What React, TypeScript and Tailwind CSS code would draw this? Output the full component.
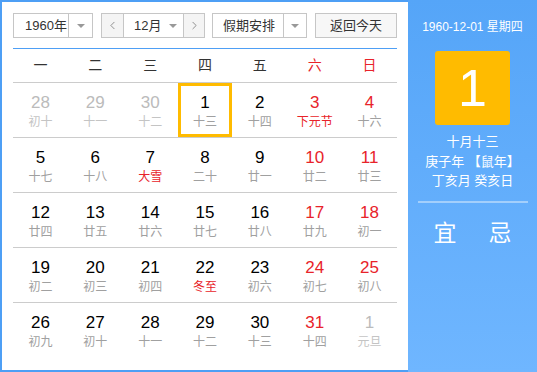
import { ChevronLeft, ChevronRight } from "lucide-react";

type Day = { n: number; lunar: string; other?: boolean; red?: boolean; redLunar?: boolean; sel?: boolean };

const weeks: Day[][] = [
  [
    { n: 28, lunar: "初十", other: true },
    { n: 29, lunar: "十一", other: true },
    { n: 30, lunar: "十二", other: true },
    { n: 1, lunar: "十三", sel: true },
    { n: 2, lunar: "十四" },
    { n: 3, lunar: "下元节", red: true, redLunar: true },
    { n: 4, lunar: "十六", red: true },
  ],
  [
    { n: 5, lunar: "十七" },
    { n: 6, lunar: "十八" },
    { n: 7, lunar: "大雪", redLunar: true },
    { n: 8, lunar: "二十" },
    { n: 9, lunar: "廿一" },
    { n: 10, lunar: "廿二", red: true },
    { n: 11, lunar: "廿三", red: true },
  ],
  [
    { n: 12, lunar: "廿四" },
    { n: 13, lunar: "廿五" },
    { n: 14, lunar: "廿六" },
    { n: 15, lunar: "廿七" },
    { n: 16, lunar: "廿八" },
    { n: 17, lunar: "廿九", red: true },
    { n: 18, lunar: "初一", red: true },
  ],
  [
    { n: 19, lunar: "初二" },
    { n: 20, lunar: "初三" },
    { n: 21, lunar: "初四" },
    { n: 22, lunar: "冬至", redLunar: true },
    { n: 23, lunar: "初六" },
    { n: 24, lunar: "初七", red: true },
    { n: 25, lunar: "初八", red: true },
  ],
  [
    { n: 26, lunar: "初九" },
    { n: 27, lunar: "初十" },
    { n: 28, lunar: "十一" },
    { n: 29, lunar: "十二" },
    { n: 30, lunar: "十三" },
    { n: 31, lunar: "十四", red: true },
    { n: 1, lunar: "元旦", other: true },
  ],
];

const Caret = () => (
  <span className="inline-block w-0 h-0 border-l-[4px] border-r-[4px] border-t-[4px] border-l-transparent border-r-transparent border-t-[#999]" />
);

const DayCell = ({ d }: { d: Day }) => {
  const num = d.other ? "text-[#bbb]" : d.red ? "text-[#e8232a]" : "text-black";
  const lun = d.other ? "text-[#c4c4c4]" : d.redLunar ? "text-[#e8232a]" : "text-[#a0a0a0]";
  return (
    <div
      className={
        "flex flex-col items-center " +
        (d.sel ? "border-[3px] border-[#ffbb00] pt-[7px]" : "pt-[10px]")
      }
    >
      <span className={"text-[17px] leading-[20px] " + num} style={{ fontFamily: '"Liberation Sans", Arial, sans-serif' }}>
        {d.n}
      </span>
      <span className={"mt-px text-[12px] leading-[16px] " + lun}>{d.lunar}</span>
    </div>
  );
};

export default function App() {
  return (
    <div
      className="flex w-[537px] h-[372px] bg-white text-[#333]"
      style={{ fontFamily: '"Liberation Sans", "Noto Sans CJK SC", sans-serif' }}
    >
      <div className="w-[408px] h-full border-l-2 border-t-2 border-b-2 border-[#4e9ff5] pl-[11px] pr-[11px] pt-[11px]">
        <div className="flex items-center h-[25px] text-[13px]">
          <div className="flex h-full w-[80px] border border-[#c6c6c6]">
            <div className="flex items-center w-[55px] pl-[11px] border-r border-[#c6c6c6]">1960年</div>
            <div className="flex flex-1 items-center justify-center"><Caret /></div>
          </div>
          <div className="flex h-full w-[104px] ml-[8px] border border-[#c6c6c6]">
            <div className="flex items-center justify-center w-[22px] bg-[#f4f4f4] border-r border-[#c6c6c6] text-[#666]">
              <ChevronLeft size={13} strokeWidth={1.3} />
            </div>
            <div className="flex items-center w-[60px] pl-[10px] gap-[8px] border-r border-[#c6c6c6]">
              <span>12月</span>
              <Caret />
            </div>
            <div className="flex flex-1 items-center justify-center bg-[#f4f4f4] text-[#666]">
              <ChevronRight size={13} strokeWidth={1.3} />
            </div>
          </div>
          <div className="flex h-full w-[95px] ml-[7px] border border-[#c6c6c6]">
            <div className="flex items-center w-[71px] pl-[10px] border-r border-[#c6c6c6]">假期安排</div>
            <div className="flex flex-1 items-center justify-center"><Caret /></div>
          </div>
          <div className="flex items-center justify-center h-full w-[82px] ml-auto border border-[#c6c6c6] bg-[#f7f7f7]">
            返回今天
          </div>
        </div>
        <div className="mt-[10px] h-px bg-[#4e9ff5]" />
        <div className="grid grid-cols-7 h-[33px] items-center text-[14px] text-center">
          {["一", "二", "三", "四", "五"].map((w) => (
            <span key={w}>{w}</span>
          ))}
          <span className="text-[#e8232a]">六</span>
          <span className="text-[#e8232a]">日</span>
        </div>
        {weeks.map((row, i) => (
          <div key={i} className="grid grid-cols-7 h-[55px] border-t border-[#cccccc]">
            {row.map((d, j) => (
              <DayCell key={j} d={d} />
            ))}
          </div>
        ))}
      </div>
      <div className="flex flex-col items-center w-[129px] h-full bg-gradient-to-b from-[#55a5f8] to-[#6fb6ff] text-white">
        <div className="mt-[19px] text-[12px] leading-[16px]">1960-12-01 星期四</div>
        <div className="mt-[16px] flex items-center justify-center w-[75px] h-[74px] rounded-[3px] bg-[#ffbb00] text-[52px] leading-none" style={{ fontFamily: '"Liberation Sans", Arial, sans-serif' }}>
          1
        </div>
        <div className="mt-[7px] text-[13px] leading-[19.5px] text-center">
          <div>十月十三</div>
          <div>庚子年 【鼠年】</div>
          <div>丁亥月 癸亥日</div>
        </div>
        <div className="mt-[10px] w-[110px] h-[2px] bg-[#a3cffc]" />
        <div className="mt-[16px] flex gap-[32px] text-[23px] leading-[28px]">
          <span>宜</span>
          <span>忌</span>
        </div>
      </div>
    </div>
  );
}
